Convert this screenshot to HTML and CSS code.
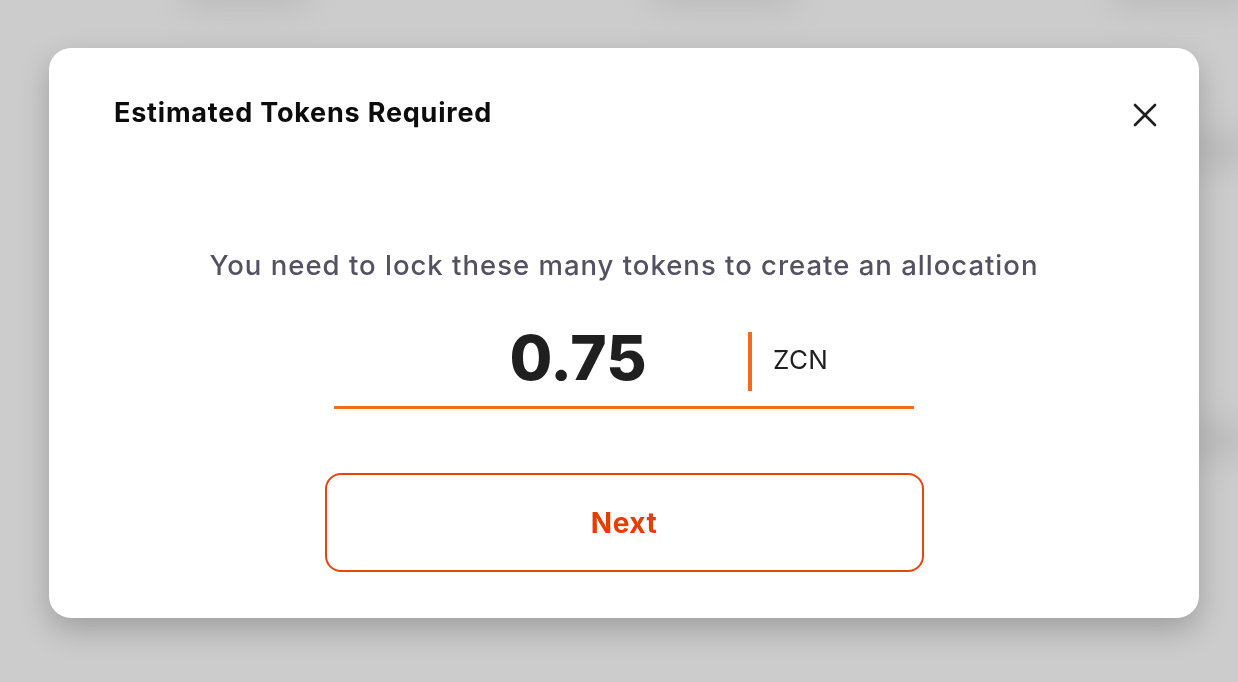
FILE: index.html
```html
<!DOCTYPE html>
<html>
<head>
<meta charset="utf-8">
<link rel="stylesheet" href="styles.css">
</head>
<body>
<div class="backdrop">
  <div class="ghost g1"></div>
  <div class="ghost g2"></div>
  <div class="ghost g3"></div>
  <div class="ghost g4"></div>
  <div class="ghost g5"></div>
</div>
<div class="modal">
  <div class="header">
    <h2 class="title">Estimated Tokens Required</h2>
    <button class="close" aria-label="Close">
      <svg width="26" height="26" viewBox="0 0 26 26"><path d="M3 3L23 23M23 3L3 23" stroke="#1d1d22" stroke-width="2.6" stroke-linecap="round"/></svg>
    </button>
  </div>
  <div class="body">
    <p class="lead">You need to lock these many tokens to create an allocation</p>
    <div class="amount-field">
      <div class="amount">0.75</div>
      <div class="divider"></div>
      <div class="unit">ZCN</div>
    </div>
    <button class="next">Next</button>
  </div>
</div>
</body>
</html>
```
FILE: styles.css
```css
html, body {
  margin: 0;
  padding: 0;
}
body {
  width: 1238px;
  height: 682px;
  overflow: hidden;
  background: #cccccc;
  font-family: Inter, "Noto Sans", sans-serif;
  position: relative;
}
.backdrop {
  position: absolute;
  inset: 0;
  filter: blur(14px);
}
.ghost {
  position: absolute;
  background: #bdbdbd;
  border-radius: 20px;
}
.g1 { left: 180px; top: -30px; width: 130px; height: 40px; }
.g2 { left: 650px; top: -30px; width: 150px; height: 40px; }
.g3 { left: 1110px; top: -30px; width: 140px; height: 40px; }
.g4 { left: 1190px; top: 130px; width: 60px; height: 40px; }
.g5 { left: 1190px; top: 420px; width: 60px; height: 40px; }
.modal {
  position: relative;
  margin: 48px 0 0 49px;
  width: 1150px;
  height: 570px;
  background: #ffffff;
  border-radius: 22px;
  box-shadow: 0 12px 30px rgba(0, 0, 0, 0.22);
  display: flex;
  flex-direction: column;
}
.header {
  display: flex;
  align-items: center;
  justify-content: space-between;
  padding: 48px 37px 0 65px;
  height: 34px;
}
.title {
  margin: 0;
  font-size: 27px;
  line-height: 34px;
  font-weight: 700;
  letter-spacing: 0.8px;
  color: #0c0c0c;
}
.close {
  border: 0;
  background: none;
  padding: 0;
  width: 34px;
  height: 34px;
  margin-top: 4px;
  display: flex;
  align-items: center;
  justify-content: center;
  cursor: pointer;
}
.body {
  display: flex;
  flex-direction: column;
  align-items: center;
  padding-top: 118px;
}
.lead {
  margin: 0;
  font-size: 27.5px;
  line-height: 34px;
  font-weight: 500;
  letter-spacing: 1px;
  color: #545260;
}
.amount-field {
  margin-top: 50px;
  width: 580px;
  height: 74px;
  border-bottom: 3px solid #f36b1c;
  display: grid;
  grid-template-columns: 414px 4px 1fr;
  align-items: start;
}
.amount {
  font-size: 62px;
  font-weight: 800;
  color: #1f1f1f;
  text-align: center;
  line-height: 52px;
  padding-left: 74px;
}
.divider {
  height: 59px;
  background: #f36b1c;
}
.unit {
  font-size: 26px;
  color: #1f1f1f;
  padding-left: 21px;
  letter-spacing: 0.4px;
  line-height: 56px;
}
.next {
  margin-top: 64px;
  width: 599px;
  height: 99px;
  border: 2px solid #e8440d;
  border-radius: 16px;
  background: #ffffff;
  color: #e43f00;
  font-family: Inter, "Noto Sans", sans-serif;
  font-size: 28px;
  font-weight: 700;
  letter-spacing: 0.5px;
  cursor: pointer;
}
```
